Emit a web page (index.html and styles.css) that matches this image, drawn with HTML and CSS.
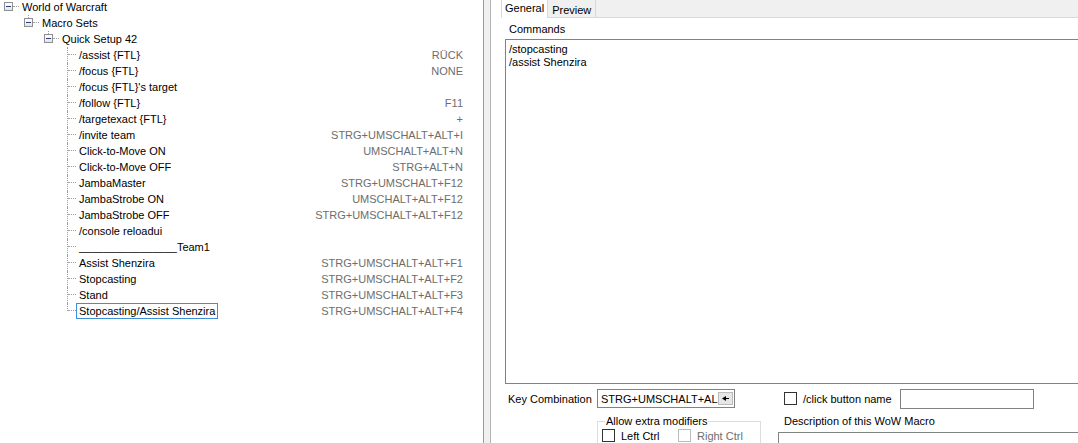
FILE: index.html
```html
<!DOCTYPE html>
<html lang="en">
<head>
    <meta charset="UTF-8">
    <title>WoW Macro Sets</title>
    <link rel="stylesheet" href="styles.css">
</head>
<body>
<div id="window">
    <div class="tree">
        <div class="row lvl0"><span class="twisty"><i class="box"></i></span><span class="label">World of Warcraft</span></div>
        <div class="row lvl1"><span class="twisty"><i class="box"></i></span><span class="label">Macro Sets</span></div>
        <div class="row lvl2"><span class="twisty"><i class="box"></i></span><span class="label">Quick Setup 42</span></div>
        <div class="row leaf"><span class="twisty"></span><span class="label">/assist {FTL}</span><span class="key">RÜCK</span></div>
        <div class="row leaf"><span class="twisty"></span><span class="label">/focus {FTL}</span><span class="key">NONE</span></div>
        <div class="row leaf"><span class="twisty"></span><span class="label">/focus {FTL}'s target</span><span class="key"></span></div>
        <div class="row leaf"><span class="twisty"></span><span class="label">/follow {FTL}</span><span class="key">F11</span></div>
        <div class="row leaf"><span class="twisty"></span><span class="label">/targetexact {FTL}</span><span class="key">+</span></div>
        <div class="row leaf"><span class="twisty"></span><span class="label">/invite team</span><span class="key">STRG+UMSCHALT+ALT+I</span></div>
        <div class="row leaf"><span class="twisty"></span><span class="label">Click-to-Move ON</span><span class="key">UMSCHALT+ALT+N</span></div>
        <div class="row leaf"><span class="twisty"></span><span class="label">Click-to-Move OFF</span><span class="key">STRG+ALT+N</span></div>
        <div class="row leaf"><span class="twisty"></span><span class="label">JambaMaster</span><span class="key">STRG+UMSCHALT+F12</span></div>
        <div class="row leaf"><span class="twisty"></span><span class="label">JambaStrobe ON</span><span class="key">UMSCHALT+ALT+F12</span></div>
        <div class="row leaf"><span class="twisty"></span><span class="label">JambaStrobe OFF</span><span class="key">STRG+UMSCHALT+ALT+F12</span></div>
        <div class="row leaf"><span class="twisty"></span><span class="label">/console reloadui</span><span class="key"></span></div>
        <div class="row leaf"><span class="twisty"></span><span class="label">________________Team1</span><span class="key"></span></div>
        <div class="row leaf"><span class="twisty"></span><span class="label">Assist Shenzira</span><span class="key">STRG+UMSCHALT+ALT+F1</span></div>
        <div class="row leaf"><span class="twisty"></span><span class="label">Stopcasting</span><span class="key">STRG+UMSCHALT+ALT+F2</span></div>
        <div class="row leaf"><span class="twisty"></span><span class="label">Stand</span><span class="key">STRG+UMSCHALT+ALT+F3</span></div>
        <div class="row leaf last"><span class="twisty"></span><span class="label selected">Stopcasting/Assist Shenzira</span><span class="key">STRG+UMSCHALT+ALT+F4</span></div>
    </div>
    <div class="splitter"></div>
    <div class="editor">
        <div class="tabs">
            <div class="tab active">General</div>
            <div class="tab">Preview</div>
            <div class="tab-fill"></div>
        </div>
        <div class="page">
            <div class="caption">Commands</div>
            <div class="commands">/stopcasting<br>/assist Shenzira</div>
            <div class="line-one">
                <div class="field-label">Key Combination</div>
                <div class="hotkey">
                    <span class="hotkey-text">STRG+UMSCHALT+AL</span>
                    <span class="hotkey-btn">
                        <svg width="9" height="7" viewBox="0 0 9 7"><path d="M1 3.5 L5 1 L5 6 Z" fill="#000"/><rect x="4" y="3" width="4" height="1" fill="#000"/></svg>
                    </span>
                </div>
                <span class="check"></span>
                <span class="check-text">/click button name</span>
                <div class="text-input"></div>
            </div>
            <div class="line-two">
                <fieldset class="group">
                    <legend>Allow extra modifiers</legend>
                    <div class="mods">
                        <span class="check small"></span><span class="mod">Left Ctrl</span>
                        <span class="check small off"></span><span class="mod off">Right Ctrl</span>
                    </div>
                </fieldset>
                <div class="desc">
                    <div class="desc-label">Description of this WoW Macro</div>
                    <div class="desc-box"></div>
                </div>
            </div>
        </div>
    </div>
</div>
</body>
</html>
```

FILE: styles.css
```css
html, body{
    margin:0px;
    padding:0px;
    width:1078px;
    height:443px;
    overflow:hidden;
    background:#ffffff;
    font-family:"Liberation Sans", Arial, sans-serif;
    font-size:11px;
    color:#000000;
}
#window{
    display:flex;
    width:1078px;
    height:443px;
}

/* tree on the left */
.tree{
    width:463px;
    padding-right:20px;
    margin-top:-1px;
    flex:none;
}
.row{
    display:flex;
    align-items:center;
    height:16px;
    white-space:nowrap;
}
.lvl1 .twisty{ margin-left:20px; }
.lvl2 .twisty{ margin-left:40px; }
.leaf .twisty{ margin-left:60px; width:16px; }
.twisty{
    position:relative;
    width:19px;
    height:16px;
    flex:none;
}
.box{
    position:absolute;
    left:4px;
    top:3px;
    width:9px;
    height:9px;
    box-sizing:border-box;
    border:1px solid #8f8f8f;
    background:linear-gradient(#ffffff, #e4e4e4);
}
.box::after{
    content:"";
    position:absolute;
    left:1px;
    top:3px;
    width:5px;
    height:1px;
    background:#24407c;
}
.lvl0 .twisty::after, .lvl1 .twisty::after, .lvl2 .twisty::after{
    content:"";
    position:absolute;
    left:13px;
    top:7px;
    width:6px;
    border-top:1px dotted #a0a0a0;
}
.lvl1 .twisty::before, .lvl2 .twisty::before{
    content:"";
    position:absolute;
    left:8px;
    top:0px;
    height:3px;
    border-left:1px dotted #a0a0a0;
}
.leaf .twisty::before{
    content:"";
    position:absolute;
    left:7px;
    top:0px;
    height:16px;
    border-left:1px dotted #a0a0a0;
}
.leaf.last .twisty::before{ height:8px; }
.leaf .twisty::after{
    content:"";
    position:absolute;
    left:8px;
    top:7px;
    width:8px;
    border-top:1px dotted #a0a0a0;
}
.label{
    border:1px solid transparent;
    padding:0px 2px;
    line-height:14px;
}
.label.selected{
    border-color:#3c8fd8;
}
.key{
    margin-left:auto;
    color:#6d6d6d;
}

.splitter{
    width:6px;
    flex:none;
    background:#f0f0f0;
    border-left:1px solid #9b9b9b;
    border-right:1px solid #b4b4b4;
}

/* right side */
.editor{
    flex:1;
    min-width:0px;
    display:flex;
    flex-direction:column;
}
.tabs{
    display:flex;
    height:18px;
    padding-left:10px;
    flex:none;
}
.tab{
    box-sizing:border-box;
    height:18px;
    line-height:14px;
    white-space:nowrap;
    flex:none;
}
.tab.active{
    padding:1px 3px 0px 3px;
    background:#ffffff;
    border-left:1px solid #d9d9d9;
}
.tab:not(.active){
    padding:3px 4px 0px 4px;
    background:#f0f0f0;
    border:1px solid #d9d9d9;
    border-top:none;
}
.tab-fill{
    flex:1;
    background:#f0f0f0;
    border-bottom:1px solid #d9d9d9;
}
.page{
    padding-left:14px;
}
.caption{
    margin:5px 0px 0px 4px;
    line-height:13px;
}
.commands{
    margin-top:3px;
    box-sizing:border-box;
    height:345px;
    width:600px;
    border:1px solid #828282;
    padding:3px 3px;
    line-height:13px;
}
.line-one{
    display:flex;
    align-items:center;
    margin-top:5px;
    height:19px;
}
.field-label{
    width:89px;
    padding-left:3px;
    flex:none;
}
.hotkey{
    display:flex;
    align-items:center;
    box-sizing:border-box;
    width:138px;
    height:19px;
    border:1px solid #828282;
    padding-left:3px;
    flex:none;
}
.hotkey-text{
    flex:1;
    white-space:nowrap;
}
.hotkey-btn{
    display:flex;
    align-items:center;
    justify-content:center;
    width:15px;
    height:13px;
    margin-right:2px;
    box-sizing:border-box;
    border:1px solid #bcbcbc;
    background:#e6e6e6;
    flex:none;
}
.check{
    box-sizing:border-box;
    width:13px;
    height:13px;
    border:1px solid #333333;
    background:#ffffff;
    flex:none;
}
.line-one .check{
    margin-left:49px;
}
.check-text{
    margin-left:6px;
    width:97px;
    flex:none;
}
.text-input{
    box-sizing:border-box;
    width:134px;
    height:20px;
    border:1px solid #828282;
}
.line-two{
    display:flex;
    margin-top:7px;
    margin-left:92px;
}
.group{
    box-sizing:border-box;
    width:164px;
    height:40px;
    margin:0px;
    padding:1px 4px;
    border:1px solid #dcdcdc;
    flex:none;
}
.group legend{
    padding:0px 1px;
    margin-left:3px;
    line-height:13px;
}
.mods{
    display:flex;
    align-items:center;
}
.mod{
    margin-left:6px;
    width:57px;
}
.check.off{
    border-color:#bcbcbc;
}
.mod.off{
    color:#6d6d6d;
}
.desc{
    margin-left:17px;
    flex:1;
}
.desc-label{
    padding-left:6px;
    line-height:13px;
}
.desc-box{
    margin-top:4px;
    height:40px;
    border:1px solid #828282;
    border-right:none;
}
```
